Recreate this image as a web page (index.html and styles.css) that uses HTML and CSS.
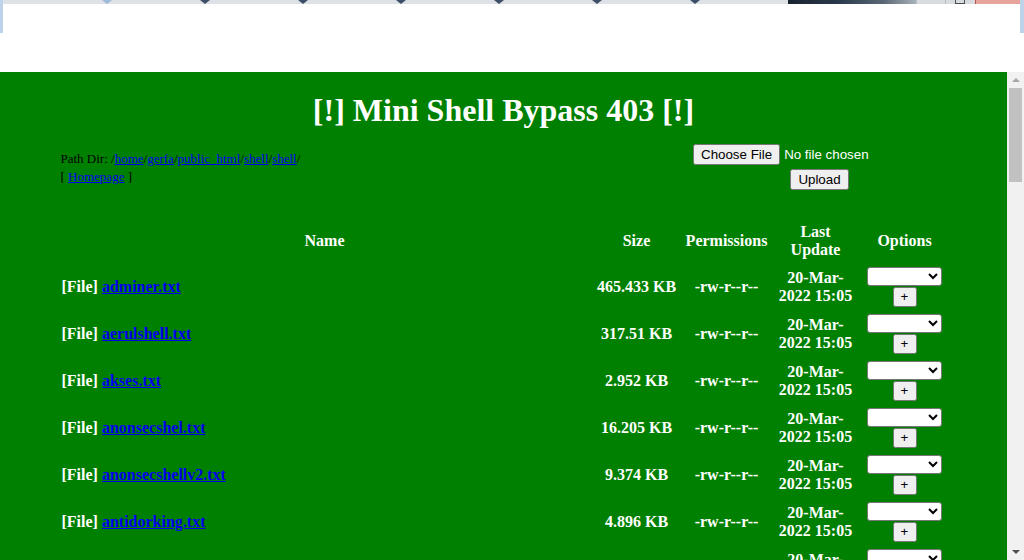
FILE: index.html
```html
<!DOCTYPE html>
<html>
<head>
<meta charset="utf-8">
<title>Mini Shell Bypass 403</title>
<link rel="stylesheet" href="styles.css">
</head>
<body>
<header class="top">
  <div class="edge edge-left"></div>
  <div class="top-mid">
    <div class="tabs">
      <span class="notch notch-first"></span>
      <span class="notch"></span>
      <span class="notch"></span>
      <span class="notch"></span>
      <span class="notch"></span>
      <span class="notch"></span>
      <span class="notch"></span>
      <span class="wallpaper"></span>
      <span class="ctl"></span>
      <span class="ctl ctl-max"><span class="sq"></span></span>
      <span class="ctl-close"></span>
    </div>
    <div class="white"></div>
  </div>
  <div class="edge edge-right"></div>
</header>
<div class="viewport">
  <main class="page">
    <h1 class="title">[!] Mini Shell Bypass 403 [!]</h1>
    <section class="toolbar">
      <div class="path">
        <div class="line"><span class="small">Path Dir: /<a href="#">home</a>/<a href="#">gerfa</a>/<a href="#">public_html</a>/<a href="#">shell</a>/<a href="#">shell</a>/</span></div>
        <div class="line"><span class="small">[ <a href="#">Homepage</a> ]</span></div>
      </div>
      <form class="upload">
        <input class="file" type="file" name="file">
        <input class="btn" type="submit" value="Upload">
      </form>
    </section>
    <table class="files">
      <colgroup>
        <col class="c-name"><col class="c-size"><col class="c-perm"><col class="c-date"><col class="c-opt">
      </colgroup>
      <thead>
        <tr><th>Name</th><th>Size</th><th>Permissions</th><th>Last<br>Update</th><th>Options</th></tr>
      </thead>
      <tbody>
        <tr><td class="name">[File] <a href="#">adminer.txt</a></td><td>465.433 KB</td><td>-rw-r--r--</td><td>20-Mar-<br>2022 15:05</td><td><div class="opts"><select><option></option></select><button type="button">+</button></div></td></tr>
        <tr><td class="name">[File] <a href="#">aerulshell.txt</a></td><td>317.51 KB</td><td>-rw-r--r--</td><td>20-Mar-<br>2022 15:05</td><td><div class="opts"><select><option></option></select><button type="button">+</button></div></td></tr>
        <tr><td class="name">[File] <a href="#">akses.txt</a></td><td>2.952 KB</td><td>-rw-r--r--</td><td>20-Mar-<br>2022 15:05</td><td><div class="opts"><select><option></option></select><button type="button">+</button></div></td></tr>
        <tr><td class="name">[File] <a href="#">anonsecshel.txt</a></td><td>16.205 KB</td><td>-rw-r--r--</td><td>20-Mar-<br>2022 15:05</td><td><div class="opts"><select><option></option></select><button type="button">+</button></div></td></tr>
        <tr><td class="name">[File] <a href="#">anonsecshellv2.txt</a></td><td>9.374 KB</td><td>-rw-r--r--</td><td>20-Mar-<br>2022 15:05</td><td><div class="opts"><select><option></option></select><button type="button">+</button></div></td></tr>
        <tr><td class="name">[File] <a href="#">antidorking.txt</a></td><td>4.896 KB</td><td>-rw-r--r--</td><td>20-Mar-<br>2022 15:05</td><td><div class="opts"><select><option></option></select><button type="button">+</button></div></td></tr>
        <tr><td class="name">[File] <a href="#">apalah.txt</a></td><td>3.21 KB</td><td>-rw-r--r--</td><td>20-Mar-<br>2022 15:05</td><td><div class="opts"><select><option></option></select><button type="button">+</button></div></td></tr>
      </tbody>
    </table>
  </main>
  <aside class="scrollbar">
    <div class="arrow arrow-up"></div>
    <div class="thumb"></div>
    <div class="track"></div>
    <div class="arrow arrow-down"></div>
  </aside>
</div>
</body>
</html>
```
FILE: styles.css
```css
html, body {
  margin: 0;
  padding: 0;
}
body {
  width: 1024px;
  height: 560px;
  overflow: hidden;
  background: #ffffff;
  font-family: "Liberation Serif", "Times New Roman", serif;
  font-size: 16px;
}

/* browser chrome remnant */
.top {
  display: flex;
  height: 72px;
  background: #ffffff;
}
.edge {
  height: 33px;
  background: #bcd3ea;
}
.edge-left { width: 3px; }
.edge-right { width: 5px; }
.top-mid {
  flex: 1;
  display: flex;
  flex-direction: column;
}
.tabs {
  height: 4px;
  background: #dee1e6;
  display: flex;
  align-items: stretch;
  padding-left: 99px;
}
.notch {
  width: 0;
  height: 0;
  border-left: 5px solid transparent;
  border-right: 5px solid transparent;
  border-top: 4px solid #3d4f66;
  margin-right: 88px;
}
.notch-first {
  border-top-color: #9dbbdb;
}
.wallpaper {
  width: 128px;
  background: linear-gradient(90deg, #1a2330 0%, #2a3a4c 40%, #5b6977 75%, #a9b2bb 100%);
}
.ctl {
  width: 28px;
  background: #d8dce1;
  border-left: 1px solid #b9bec5;
}
.ctl-max {
  width: 29px;
  display: flex;
  justify-content: center;
}
.sq {
  width: 8px;
  height: 3px;
  border: 1px solid #4a4f55;
  border-top: none;
}
.ctl-close {
  width: 44px;
  background: #e6a39a;
  border-left: 1px solid #b0574d;
}
.white {
  flex: 1;
  background: #ffffff;
}

/* viewport */
.viewport {
  display: flex;
  height: 488px;
}
.page {
  flex: 1;
  background: #008000;
  padding: 20px 8px 0;
  overflow: hidden;
}
.title {
  margin: 0;
  font-size: 32px;
  line-height: 37px;
  font-weight: bold;
  color: #ffffff;
  text-align: center;
}

.toolbar {
  width: 890px;
  margin: 0 auto;
  padding-top: 15px;
  display: grid;
  grid-template-columns: 1fr 258px;
  align-items: center;
}
.path {
  padding-left: 2px;
  color: #000000;
}
.line {
  line-height: normal;
}
.small {
  font-size: 13px;
}
a {
  color: #0000ee;
  text-decoration: underline;
}

.upload {
  display: flex;
  flex-direction: column;
  align-items: center;
  gap: 4px;
  margin: 0;
}
input, button, select {
  font-family: "Liberation Sans", Arial, sans-serif;
  font-size: 13.333px;
}
.file {
  width: 253px;
  color: #ffffff;
}
.btn {
  height: 21px;
}

.files {
  width: 890px;
  margin: 29px auto 0;
  border-collapse: separate;
  border-spacing: 0;
  table-layout: fixed;
  color: #ffffff;
  font-weight: bold;
}
.c-name { width: 532px; }
.c-size { width: 92px; }
.c-perm { width: 88px; }
.c-date { width: 90px; }
.c-opt { width: 88px; }

.files th, .files td {
  padding: 0;
  text-align: center;
  vertical-align: middle;
}
.files thead tr { height: 44px; }
.files tbody tr { height: 47px; }
.files td.name {
  text-align: left;
  padding-left: 3px;
}

.opts {
  display: flex;
  flex-direction: column;
  align-items: center;
  gap: 1px;
}
.opts select {
  width: 75px;
  height: 19px;
  box-sizing: border-box;
  background: #ffffff;
  border-radius: 3px;
}
.opts button {
  width: 24px;
  height: 20px;
  padding: 0;
}

/* scrollbar */
.scrollbar {
  width: 17px;
  background: #f1f1f1;
  display: flex;
  flex-direction: column;
  align-items: center;
}
.arrow {
  height: 16px;
  width: 17px;
  display: flex;
  align-items: center;
  justify-content: center;
}
.arrow-up::before {
  content: "";
  border-left: 4px solid transparent;
  border-right: 4px solid transparent;
  border-bottom: 4px solid #a3a3a3;
}
.arrow-down::before {
  content: "";
  border-left: 4px solid transparent;
  border-right: 4px solid transparent;
  border-top: 4px solid #505050;
}
.thumb {
  width: 13px;
  height: 94px;
  background: #c1c1c1;
}
.track {
  flex: 1;
}
```
